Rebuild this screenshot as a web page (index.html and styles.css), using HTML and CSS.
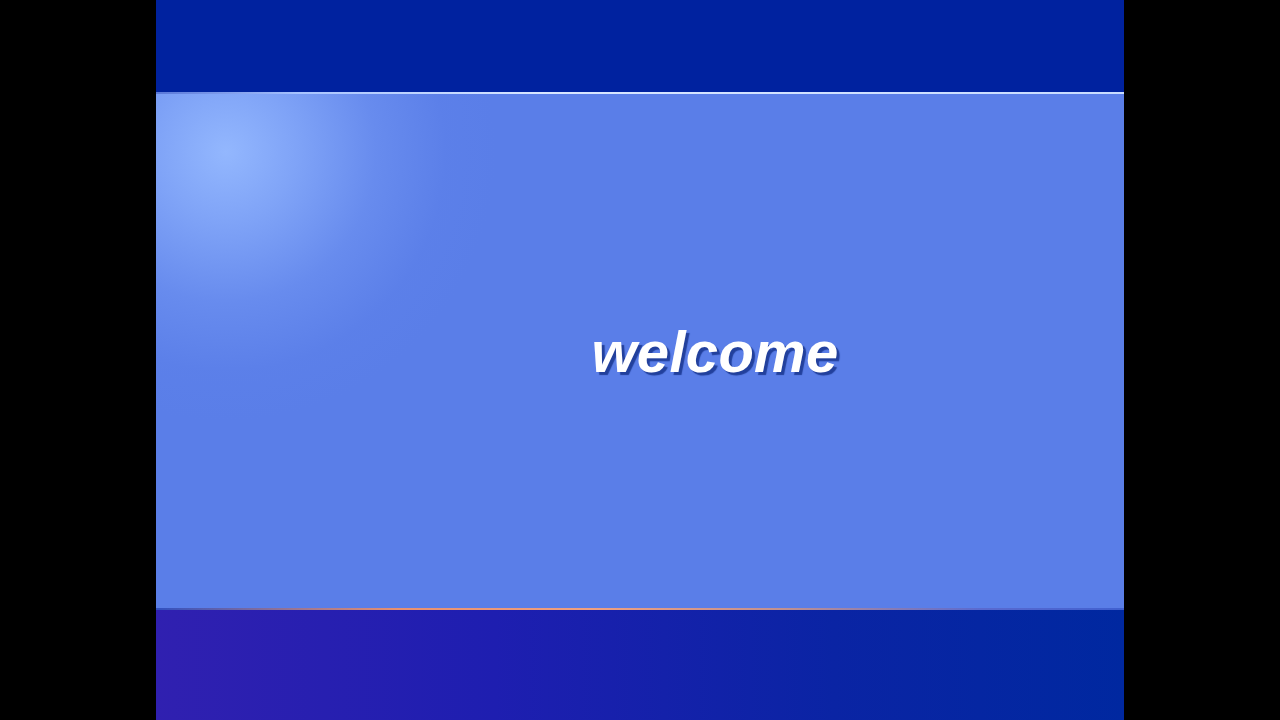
FILE: index.html
```html
<!DOCTYPE html>
<html>
<head>
<meta charset="utf-8">
<title>Welcome</title>
<link rel="stylesheet" href="styles.css">
</head>
<body>
<div class="screen">
  <div class="top-bar"></div>
  <div class="top-line"></div>
  <div class="main">
    <div class="welcome">welcome</div>
  </div>
  <div class="bottom-line"></div>
  <div class="bottom-bar"></div>
</div>
</body>
</html>
```
FILE: styles.css
```css
html, body {
  margin: 0;
  padding: 0;
  height: 100%;
  background: #000;
  overflow: hidden;
}
.screen {
  width: 968px;
  height: 720px;
  margin: 0 auto;
  display: flex;
  flex-direction: column;
}
.top-bar {
  height: 92px;
  background: #00229f;
}
.top-line {
  height: 2px;
  background: linear-gradient(to right, #5a78d8 0%, #a8c4ff 15%, #d8e6ff 40%, #c8dcff 100%);
}
.main {
  flex: 1;
  background:
    radial-gradient(circle at 70px 58px, rgba(150,186,255,0.95) 0px, rgba(140,176,252,0.75) 70px, rgba(120,156,245,0.45) 150px, rgba(100,136,238,0.15) 220px, rgba(90,126,232,0) 270px),
    #5a7ee8;
  display: flex;
  align-items: center;
  justify-content: center;
  padding-left: 150px;
  padding-top: 0;
}
.welcome {
  font-family: "Liberation Sans", Arial, sans-serif;
  font-weight: bold;
  font-style: italic;
  font-size: 58px;
  color: #ffffff;
  text-shadow: 3px 3px 1px #22409c;
  letter-spacing: 0.3px;
}
.bottom-line {
  height: 2px;
  background: linear-gradient(to right, #3050c0 0%, #e89070 25%, #f0a080 45%, #c09090 65%, #5a6ad0 85%, #4060d0 100%);
}
.bottom-bar {
  height: 110px;
  background: linear-gradient(to right, #3020b0 0%, #1e1eb0 35%, #0a24a4 70%, #0028a0 100%);
}
```
